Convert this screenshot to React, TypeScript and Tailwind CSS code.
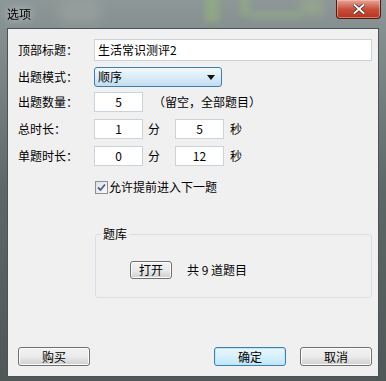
import React from "react";

const font = { fontFamily: '"Noto Sans CJK SC", "Liberation Sans", sans-serif' };

const Field = ({ value, w = "w-[49px]" }: { value: string; w?: string }) => (
  <div className={`${w} h-[20px] bg-white border border-[#c9d3dc] flex items-center justify-center text-[12px] text-black`}>
    {value}
  </div>
);

const WinButton = ({ label, primary = false, w = "w-[72px]", h = "h-[19px]" }: { label: string; primary?: boolean; w?: string; h?: string }) => (
  <button
    className={`${w} ${h} rounded-[3px] border text-[12px] leading-none flex items-center justify-center text-black ${
      primary
        ? "border-[#3c7fb1] bg-gradient-to-b from-[#eaf6fd] via-[#d9f0fc] to-[#bee6fd] shadow-[inset_0_0_0_1px_#bfe5f9]"
        : "border-[#707070] bg-gradient-to-b from-[#f2f2f2] via-[#ebebeb] to-[#cfcfcf] shadow-[inset_0_0_0_1px_#fcfcfc]"
    }`}
  >
    {label}
  </button>
);

export default function App() {
  return (
    <div
      className="w-[386px] h-[381px] flex flex-col relative overflow-hidden bg-gradient-to-b from-[#8d9797] via-[#5d6765] to-[#4f5856]"
      style={font}
    >
      {/* blurred background behind the glass */}
      <div className="absolute left-[205px] top-[-4px] w-[14px] h-[26px] bg-[#93b07f] blur-[3px] opacity-70" />
      <div className="absolute left-[240px] top-[-6px] w-[10px] h-[22px] bg-[#93b07f] blur-[3px] opacity-60" />
      <div className="absolute left-[250px] top-[12px] w-[50px] h-[6px] bg-[#98b584] blur-[3px] opacity-60" />
      <div className="absolute left-[300px] top-[-2px] w-[24px] h-[18px] bg-[#9ab288] blur-[4px] opacity-50" />
      <div className="absolute left-[60px] top-[0px] w-[40px] h-[24px] bg-[#a0a8a4] blur-[6px] opacity-50" />

      {/* title bar */}
      <div className="h-[28px] shrink-0 flex items-center pl-[7px] relative">
        <span className="text-[12px] text-black drop-shadow-[0_0_4px_rgba(255,255,255,0.9)]">选项</span>
      </div>
      <button className="absolute right-[5px] top-0 w-[45px] h-[19px] rounded-b-[4px] border border-t-0 border-[#4a1d17] bg-gradient-to-b from-[#e8a597] via-[#c7503d] to-[#b8301d] flex items-center justify-center shadow-[inset_0_0_0_1px_rgba(255,200,190,0.5)]">
        <svg width="12" height="10" viewBox="0 0 12 10">
          <path d="M1.5 1 L10.5 9 M10.5 1 L1.5 9" stroke="#3a1a14" strokeWidth="3.2" strokeLinecap="square" />
          <path d="M1.5 1 L10.5 9 M10.5 1 L1.5 9" stroke="#ffffff" strokeWidth="2" strokeLinecap="square" />
        </svg>
      </button>

      {/* client area */}
      <div className="relative flex-1 mx-[7px] mb-[4px] border border-[#48535a] bg-[#f0f0f0] flex flex-col pl-[10px] pr-[6px] pt-[10px] text-[12px] text-black">
        <div className="flex items-center h-[22px]">
          <span className="w-[76px]">顶部标题：</span>
          <div className="flex-1 h-[22px] bg-white border border-[#c9d3dc] flex items-center pl-[3px]">生活常识测评2</div>
        </div>

        <div className="flex items-center h-[20px] mt-[6px]">
          <span className="w-[76px]">出题模式：</span>
          <div className="w-[128px] h-[20px] rounded-[3px] border border-[#3c7fb1] bg-gradient-to-b from-[#f1f8fd] via-[#dcecf8] to-[#c1dcf0] flex items-center pl-[3px] pr-[6px] justify-between">
            <span>顺序</span>
            <svg width="8" height="5" viewBox="0 0 8 5">
              <path d="M0 0 H8 L4 5 Z" fill="#111" />
            </svg>
          </div>
        </div>

        <div className="flex items-center h-[20px] mt-[5px]">
          <span className="w-[76px]">出题数量：</span>
          <Field value="5" />
          <span className="ml-[10px]">（留空，全部题目）</span>
        </div>

        <div className="flex items-center h-[20px] mt-[7px]">
          <span className="w-[76px]">总时长：</span>
          <Field value="1" />
          <span className="w-[32px] pl-[5px]">分</span>
          <Field value="5" />
          <span className="pl-[6px]">秒</span>
        </div>

        <div className="flex items-center h-[20px] mt-[7px]">
          <span className="w-[76px]">单题时长：</span>
          <Field value="0" />
          <span className="w-[32px] pl-[5px]">分</span>
          <Field value="12" />
          <span className="pl-[6px]">秒</span>
        </div>

        <div className="flex items-center mt-[13px] ml-[77px] h-[16px]">
          <div className="w-[13px] h-[13px] border border-[#8e8f8f] bg-gradient-to-br from-[#e0e0e0] to-[#fafafa] flex items-center justify-center">
            <svg width="9" height="9" viewBox="0 0 9 9">
              <path d="M1 4.5 L3.5 7 L8 1.5" stroke="#4a5f97" strokeWidth="1.8" fill="none" />
            </svg>
          </div>
          <span className="ml-[1px]">允许提前进入下一题</span>
        </div>

        {/* group box */}
        <div className="relative ml-[77px] mr-[0px] mt-[39px] h-[64px] border border-[#d5dfe5] rounded-[3px] flex items-center">
          <span className="absolute left-[5px] top-[-9px] bg-[#f0f0f0] px-[2px] leading-[16px]">题库</span>
          <div className="flex items-center ml-[34px] mt-[8px]">
            <WinButton label="打开" w="w-[42px]" h="h-[18px]" />
            <span className="ml-[15px]">共 9 道题目</span>
          </div>
        </div>

        <div className="flex items-center mt-auto mb-[10px]">
          <WinButton label="购买" />
          <div className="ml-auto flex items-center gap-[14px]">
            <WinButton label="确定" primary />
            <WinButton label="取消" />
          </div>
        </div>
      </div>
    </div>
  );
}
